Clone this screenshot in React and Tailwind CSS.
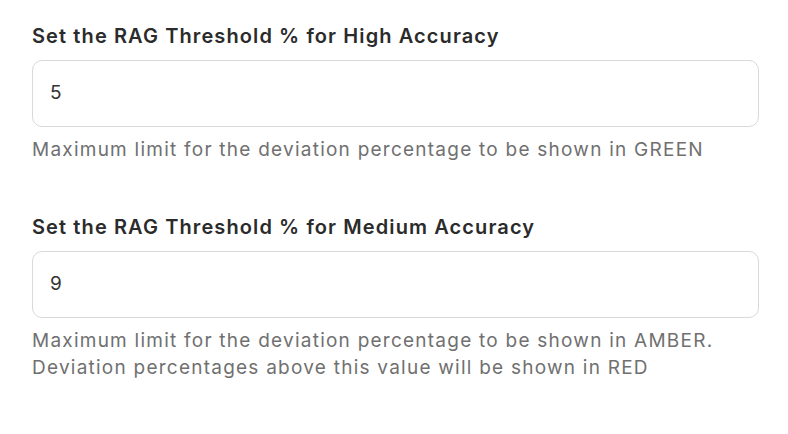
import React from "react";

function Field({ label, value, help }) {
  return (
    <div className="flex flex-col">
      <label className="text-[20px] leading-[28px] font-semibold tracking-[1.1px] text-[#2b2b2b]">{label}</label>
      <div className="mt-[10px] h-[67px] rounded-[10px] border border-[#d9d9dd] bg-white flex items-center px-[17px]">
        <span className="text-[19px] text-[#333333]">{value}</span>
      </div>
      <div className="mt-[9px] text-[19px] leading-[27px] tracking-[1.24px] text-[#707070]">
        {help.map((l, i) => (
          <div key={i}>{l}</div>
        ))}
      </div>
    </div>
  );
}

export default function App() {
  return (
    <div
      className="w-[788px] h-[434px] bg-white pl-[32px] pr-[29px] pt-[22px] flex flex-col gap-[50px]"
      style={{ fontFamily: "Inter, 'Noto Sans', sans-serif" }}
    >
      <Field
        label="Set the RAG Threshold % for High Accuracy"
        value="5"
        help={["Maximum limit for the deviation percentage to be shown in GREEN"]}
      />
      <Field
        label="Set the RAG Threshold % for Medium Accuracy"
        value="9"
        help={[
          "Maximum limit for the deviation percentage to be shown in AMBER.",
          "Deviation percentages above this value will be shown in RED",
        ]}
      />
    </div>
  );
}
